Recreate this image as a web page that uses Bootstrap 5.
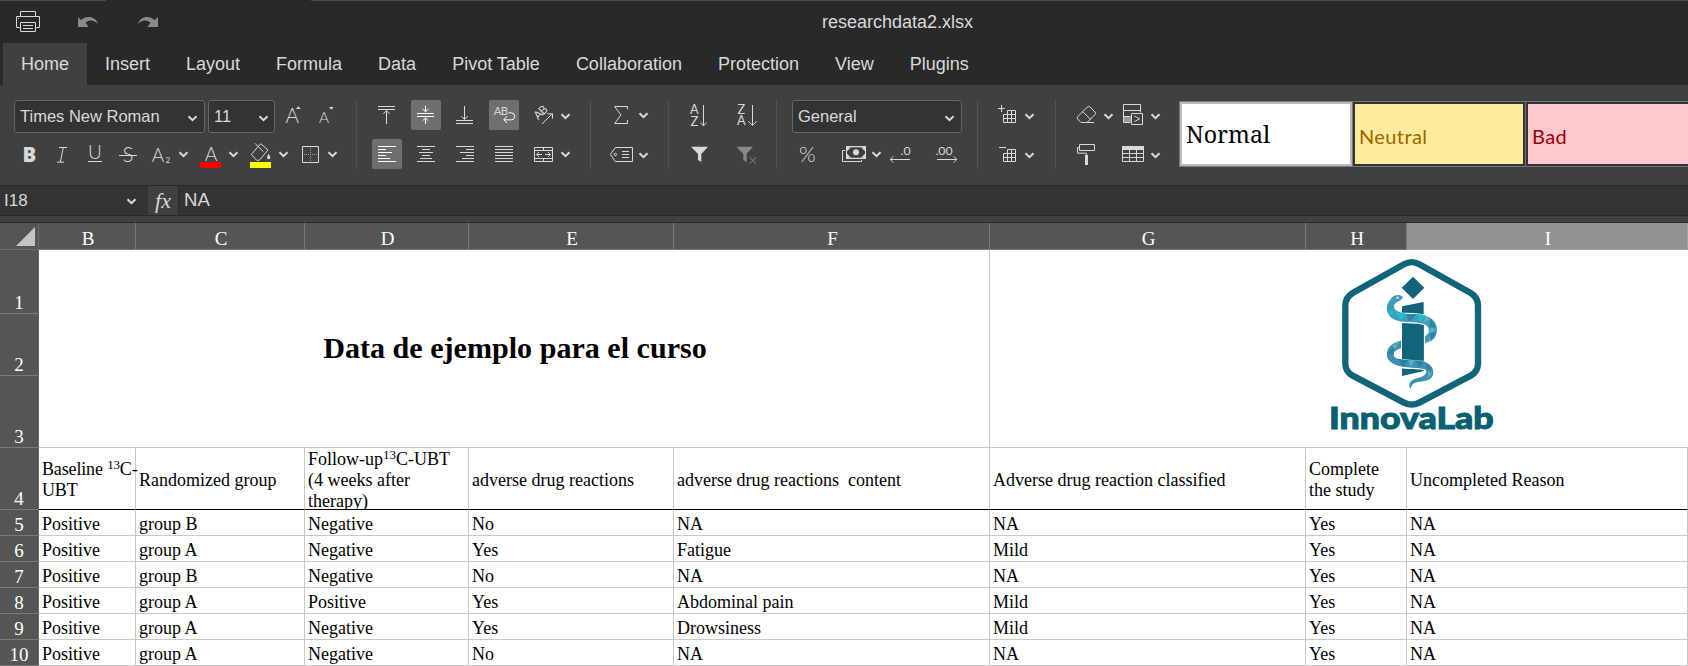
<!DOCTYPE html>
<html lang="en">
<head>
<meta charset="utf-8">
<title>researchdata2.xlsx</title>
<link href="https://cdn.jsdelivr.net/npm/bootstrap@5.3.0/dist/css/bootstrap.min.css" rel="stylesheet">
<style>
body{width:1688px;height:666px;overflow:hidden;background:#404040;color:#d9d9d9;font-family:"Liberation Sans",Arial,sans-serif;line-height:1.2}
svg{display:block;flex:none;overflow:visible}
.titlebar{height:43px;background:#292929}
.titlebar .edge{height:1px;background:#4a4a4a}
.edge-a{width:106px}.edge-b{width:1377px}
.undo{margin-left:-62px}.redo{margin-left:40px}
.doc-name{font-size:18px;margin-left:664px;padding-top:1px}
.tabs{height:42px;background:#292929;padding-left:3px}
.tabs .nav-link{color:#d9d9d9;font-size:18px;line-height:42px;padding:0 18px;border-radius:0}
.tabs .nav-link.active{background:#404040}
.ribbon{height:100px;padding-top:15px}
.tool-group{height:69px;padding-left:15px;border-right:1px solid #525252;flex:none}
.tool-row{display:flex;height:30px;align-items:flex-start}
.tool-row+.tool-row{margin-top:9px}
.g1{width:357px;padding-left:14px}.g2{width:234px}.g3{width:78px}.g4{width:108px}.g5{width:201px}.g6{width:78px;padding-left:14px}.g7{width:123px;border:0}
.gap3{gap:3px}.gap9{gap:9px}.gap18{gap:18px}.gap17{gap:17px}.gap2{gap:2px}
.tool{display:flex;width:30px;height:30px;border-radius:2px;flex:none}
.tool.on{background:#6f6f6f}
.split{display:flex;width:45px;flex:none}
.color-tool{margin-left:2px}.border-tool{margin-left:1px}
.money{margin-left:17px}.dec{margin-left:1px}.inc{margin-left:17px}
.ico{width:30px;height:30px;fill:none;stroke:#d9d9d9;stroke-width:3}
.ico text{fill:#d9d9d9;stroke:none;font-family:Lato,"Open Sans",sans-serif;font-weight:300}
.ico text.bold-b{font-family:"Open Sans",sans-serif;font-weight:800}
.ico text.reg{font-weight:400}
.ico.lit{stroke:#fff}
.ico .solid{fill:#d9d9d9;stroke:none}
.caret{width:15px;height:30px;fill:none;stroke:#d9d9d9;stroke-width:2}
.combo{height:33px;background:#333;border:1px solid #666;border-radius:3px;font-size:16.5px;padding-left:5px;flex:none}
.combo .caret{margin:2px 4px 0 0}
.w-font{width:191px}.w-size{width:67px}.w-size .caret{margin-right:3px}.w-fmt{width:170px}
.gallery{height:66px;margin-top:1px;border:1px solid #777;border-right:0;flex:none;width:509px;overflow:hidden}
.swatch{width:172px;height:64px;border:2px solid #333;box-shadow:1px 0 0 #777;margin-right:1px;flex:none;padding-left:4px}
.swatch.picked{border-color:#bbb}
.normal{background:#fff;color:#000;font:23.2px "Noto Serif","Liberation Serif",serif}
.neutral{background:#ffeb9c;color:#9c6500}
.bad{background:#ffc7ce;color:#9c0006}
.neutral,.bad{font:20px Lato,sans-serif;letter-spacing:.4px;padding-top:3px}
.formula{height:31px;background:#333;border-top:1px solid #282828;border-bottom:1px solid #282828}
.name-box{width:147px;padding:1px 0 0 4px;font-size:17px}
.fx{width:31px;background:#404040;border-right:1px solid #282828;font:italic 22px "Liberation Serif",serif;margin-left:1px}
.f-text{font-size:18.6px;padding-left:5px}
.strip{height:7px;border-bottom:1px solid #282828}
.sheet{display:grid;grid-template-columns:39px 97px 169px 164px 205px 316px 316px 101px 281px;grid-template-rows:27px 64px 62px 72px 62px repeat(6,26px);background:#fff;color:#000;font:18px/21px "Liberation Serif","Times New Roman",serif}
.sheet>div{border-right:1px solid #c8c8c8;border-bottom:1px solid #c8c8c8;display:flex;align-items:center;padding:3px 0 0 3px;white-space:pre;min-width:0;min-height:0}
.sheet>.ch,.sheet>.rh{background:#555;color:#fff;border-color:#7a7a7a;justify-content:center;padding:0;font-size:19px}
.sheet>.ch{padding:4px 0 0 2px}
.sheet>.rh{align-items:flex-end;border-right-color:#666}
.sheet>.sel{background:#929292;border-color:#a0a0a0}
.sheet>.corner{align-items:flex-end;justify-content:flex-end;border-color:#6b7340;padding:0 3px 3px 0}
.sheet>.hd{border-bottom-color:#000}
.sheet>.merge-a{grid-column:2/7;grid-row:2/5;font-size:30.1px;font-weight:700;justify-content:center;padding:0 0 0 2px}
.sheet>.merge-b{grid-column:7/10;grid-row:2/5;padding:0 0 0 310px;align-items:flex-start;border-right:0}
.sheet>.clip{overflow:hidden}
.tight{letter-spacing:-.15px}
.sup{font-size:13px;position:relative;top:-6px;line-height:1px}
</style>
</head>
<body>
<svg width="0" height="0" class="position-absolute">
  <symbol id="dn" viewBox="0 0 15 30"><path d="M3.5 13.2l4 4 4-4"/></symbol>
</svg>

<header class="titlebar">
  <div class="d-flex justify-content-between"><div class="edge edge-a"></div><div class="edge edge-b"></div></div>
  <div class="d-flex align-items-center">
    <svg width="140" height="42" viewBox="0 3 420 126" fill="none" stroke="#d9d9d9" stroke-width="3">
      <path d="M61.500 49.500V34.500H106.500V49.500M61.500 82.500H49.500V49.500H118.500V82.500H106.500M61.500 67.500H106.500V94.500H61.500zM69 76.500H99M69 85.500H99M54 55.500H57"/>
    </svg>
    <svg width="20" height="42" viewBox="234 3 60 126" class="undo" fill="#8a8a8a"><path d="M234 51L243 60C258 46 287 47 294 73C283 60 267 58 257 69L266 81H234z"/></svg>
    <svg width="20" height="42" viewBox="415 3 60 126" class="redo" fill="#8a8a8a"><path d="M475 51L465 60C450 46 421 47 415 73C425 60 442 58 452 69L443 81H475z"/></svg>
    <div class="doc-name">researchdata2.xlsx</div>
  </div>
</header>

<nav class="nav flex-nowrap tabs">
  <a class="nav-link active">Home</a><a class="nav-link">Insert</a><a class="nav-link">Layout</a><a class="nav-link">Formula</a><a class="nav-link">Data</a><a class="nav-link">Pivot Table</a><a class="nav-link">Collaboration</a><a class="nav-link">Protection</a><a class="nav-link">View</a><a class="nav-link">Plugins</a>
</nav>

<section class="ribbon d-flex">
  <div class="tool-group g1">
    <div class="tool-row gap3">
      <div class="combo w-font d-flex align-items-center justify-content-between"><span>Times New Roman</span><svg class="caret"><use href="#dn"/></svg></div>
      <div class="combo w-size d-flex align-items-center justify-content-between"><span>11</span><svg class="caret"><use href="#dn"/></svg></div>
      <div class="tool"><svg class="ico" viewBox="834 300 90 90"><text x="877" y="370" font-size="62" text-anchor="middle">A</text><path class="solid" d="M888 327L895 319L902 327z"/></svg></div>
      <div class="tool"><svg class="ico" viewBox="933 300 90 90"><text x="972" y="370" font-size="46" text-anchor="middle">A</text><path class="solid" d="M987 321L994 329L1001 321z"/></svg></div>
    </div>
    <div class="tool-row gap3">
      <div class="tool"><svg class="ico" viewBox="42 417 90 90"><text class="bold-b" x="88" y="486" font-size="61" text-anchor="middle">B</text></svg></div>
      <div class="tool"><svg class="ico" viewBox="141 417 90 90"><path d="M177 442.500H201M171 486.500H192M190 442L181 486"/></svg></div>
      <div class="tool"><svg class="ico" viewBox="240 417 90 90"><text x="285" y="478" font-size="57" text-anchor="middle">U</text><path d="M264 484.500H306"/></svg></div>
      <div class="tool"><svg class="ico" viewBox="339 417 90 90"><text x="384" y="486" font-size="62" text-anchor="middle">S</text><path d="M357 466.500H411"/></svg></div>
      <div class="split"><svg class="ico" viewBox="438 417 90 90"><text x="474" y="485" font-size="57" text-anchor="middle">A</text><text class="reg" x="504" y="489" font-size="25" text-anchor="middle">2</text></svg><svg class="caret"><use href="#dn"/></svg></div>
      <div class="split color-tool"><svg class="ico" viewBox="588 417 90 90"><text x="633" y="482" font-size="58" text-anchor="middle">A</text><path d="M600 486H663V504H600z" fill="#f00" stroke="none"/></svg><svg class="caret"><use href="#dn"/></svg></div>
      <div class="split color-tool"><svg class="ico" viewBox="738 417 90 90"><path d="M754 463L782 431L804 450L778 481H770zM765 430L790 455"/><path class="solid" d="M806 461Q816 476 806 478Q796 476 806 461z"/><path d="M750 486H813V504H750z" fill="#ff0" stroke="none"/></svg><svg class="caret"><use href="#dn"/></svg></div>
      <div class="split border-tool"><svg class="ico" viewBox="885 417 90 90"><path d="M907.500 439.500H955.500V487.500H907.500z"/><path stroke="#9a9a9a" stroke-dasharray="3 3" d="M912 463.500H954M931.500 444V486"/></svg><svg class="caret"><use href="#dn"/></svg></div>
    </div>
  </div>

  <div class="tool-group g2">
    <div class="tool-row gap9">
      <div class="tool"><svg class="ico" viewBox="96 45 90 90"><path d="M114 64.500H165M114 73.500H165M139.500 117V77M130 87L139.500 77L149 87"/></svg></div>
      <div class="tool on"><svg class="ico lit" viewBox="213 45 90 90"><path d="M231 85.500H282M231 94.500H282M256.500 62V80M248 72L256.500 80L265 72M256.500 117V99M248 107L256.500 99L265 107"/></svg></div>
      <div class="tool"><svg class="ico" viewBox="330 45 90 90"><path d="M348 106.500H399M348 115.500H399M373.500 63V103M364 94L373.500 103L383 94"/></svg></div>
      <div class="tool on"><svg class="ico lit" viewBox="447 45 90 90"><text class="reg" x="461" y="90" font-size="34" textLength="43" fill="#fff">AB</text><path d="M506 83.500H514Q524 84 524 94T514 104.500H492M501 94L491 104L501 114"/></svg></div>
      <div class="split"><svg class="ico" viewBox="564 45 90 90"><text class="reg" transform="translate(595 106) rotate(-45)" font-size="35" textLength="43">AB</text><path d="M606 117L637 86M622 86.500H637.500V101"/></svg><svg class="caret"><use href="#dn" y="1"/></svg></div>
    </div>
    <div class="tool-row gap9">
      <div class="tool on"><svg class="ico lit" viewBox="96 162 90 90"><path d="M114 184.500H168M114 193.500H138M114 202.500H156M114 211.500H138M114 220.500H150M114 229.500H168"/></svg></div>
      <div class="tool"><svg class="ico" viewBox="213 162 90 90"><path d="M231 184.500H285M246 193.500H270M237 202.500H279M246 211.500H270M240 220.500H276M231 229.500H285"/></svg></div>
      <div class="tool"><svg class="ico" viewBox="330 162 90 90"><path d="M348 184.500H402M378 193.500H402M360 202.500H402M378 211.500H402M366 220.500H402M348 229.500H402"/></svg></div>
      <div class="tool"><svg class="ico" viewBox="447 162 90 90"><path d="M465 184.500H519M465 193.500H519M465 202.500H519M465 211.500H519M465 220.500H519M465 229.500H519"/></svg></div>
      <div class="split"><svg class="ico" viewBox="564 162 90 90"><path d="M583.500 187.500H637.500V229.500H583.500zM583.500 196.500H637.500M583.500 220.500H637.500M610.500 187V196M610.500 220V229M590 208.500H606M615 208.500H631M597 201L590 208.500L597 216M624 201L631 208.500L624 216"/></svg><svg class="caret"><use href="#dn"/></svg></div>
    </div>
  </div>

  <div class="tool-group g3">
    <div class="tool-row"><div class="split"><svg class="ico" viewBox="798 45 90 90"><path d="M862.500 73V64.500H824L843 90L824 115.500H862.500V105"/></svg><svg class="caret"><use href="#dn"/></svg></div></div>
    <div class="tool-row"><div class="split"><svg class="ico" viewBox="798 162 90 90"><path d="M811 208.500L826 187.500H877.500V229.500H826zM846 199.500H867M846 208.500H867M846 217.500H867"/><circle cx="826" cy="208.500" r="3.500"/></svg><svg class="caret"><use href="#dn" y="1"/></svg></div></div>
  </div>

  <div class="tool-group g4">
    <div class="tool-row gap18">
      <div class="tool"><svg class="ico" viewBox="132 45 90 90"><text class="reg" x="163" y="88" font-size="38" text-anchor="middle">A</text><text class="reg" x="163" y="123" font-size="39" text-anchor="middle">Z</text><path d="M190.500 60V122M181 113L190.500 122L200 113"/></svg></div>
      <div class="tool"><svg class="ico" viewBox="276 45 90 90"><text class="reg" x="304" y="87" font-size="38" text-anchor="middle">Z</text><text class="reg" x="304" y="121" font-size="38" text-anchor="middle">A</text><path d="M337.500 60V121M325 109L337.500 121L350 109"/></svg></div>
    </div>
    <div class="tool-row gap18">
      <div class="tool"><svg class="ico" viewBox="132 162 90 90"><path class="solid" d="M153 185H204L184 207V231L174 225V207z"/></svg></div>
      <div class="tool"><svg class="ico" viewBox="276 162 90 90"><path d="M289 185H339L320 206V231L310 225V207z" fill="#8a8a8a" stroke="none"/><path stroke="#8a8a8a" d="M329 217L348 236M348 217L329 236"/></svg></div>
    </div>
  </div>

  <div class="tool-group g5">
    <div class="tool-row"><div class="combo w-fmt d-flex align-items-center justify-content-between"><span>General</span><svg class="caret"><use href="#dn"/></svg></div></div>
    <div class="tool-row">
      <div class="tool"><svg class="ico" viewBox="456 162 90 90"><text x="502" y="230" font-size="62" text-anchor="middle" textLength="50" lengthAdjust="spacingAndGlyphs">%</text></svg></div>
      <div class="split money"><svg class="ico" viewBox="597 162 90 90"><path class="solid" d="M618 183H678V222H618z"/><path d="M627 187H669L675 193V212L669 218H627L621 212V193z" fill="#404040" stroke="none"/><circle cx="648" cy="202" r="9" class="solid"/><path d="M633 187L621 199V187zM663 187L675 199V187zM633 218L621 206V218zM663 218L675 206V218z" class="solid"/><path d="M615 196.500H607.500V229.500H664.500V225"/></svg><svg class="caret"><use href="#dn"/></svg></div>
      <div class="tool dec"><svg class="ico" viewBox="735 162 90 90"><text class="reg" x="812" y="210" font-size="37" text-anchor="end">.0</text><path d="M810 223.500H751M760 214L751 223.500L760 233"/></svg></div>
      <div class="tool inc"><svg class="ico" viewBox="876 162 90 90"><text class="reg" x="938" y="210" font-size="37" text-anchor="end">.00</text><path d="M891 223.500H950M941 214L950 223.500L941 233"/></svg></div>
    </div>
  </div>

  <div class="tool-group g6">
    <div class="tool-row"><div class="split"><svg class="ico" viewBox="96 45 90 90"><path d="M114 70.500H134M124.500 60V81M142.500 76.500H166.500V112.500H130.500V88.500H166.500M130.500 100.500H166.500M142.500 76.500V112.500M154.500 76.500V112.500"/></svg><svg class="caret"><use href="#dn" y="1"/></svg></div></div>
    <div class="tool-row"><div class="split"><svg class="ico" viewBox="96 162 90 90"><path d="M117 187.500H138M142.500 193.500H166.500V229.500H130.500V205.500H166.500M130.500 217.500H166.500M142.500 193.500V229.500M154.500 193.500V229.500"/></svg><svg class="caret"><use href="#dn" y="1"/></svg></div></div>
  </div>

  <div class="tool-group g7">
    <div class="tool-row gap2">
      <div class="split"><svg class="ico" viewBox="333 45 90 90"><path d="M363 112.500L353 102Q350 98 354 94L382 66Q386 62 390 66L405 81Q409 85 405 89L381 112.500M368 80L393 104M363 112.500H402"/></svg><svg class="caret"><use href="#dn" y="1"/></svg></div>
      <div class="split"><svg class="ico" viewBox="474 45 90 90"><path d="M490 94H514V112H490z" fill="#999" stroke="none"/><path d="M511 112.500H490.500V58.500H541.500V82M490.500 76.500H541.500M490.500 94.500H511M514.500 85.500H547.500V118.500H514.500zM523 93L539 101.500L523 110"/></svg><svg class="caret"><use href="#dn" y="1"/></svg></div>
    </div>
    <div class="tool-row gap17">
      <div class="tool"><svg class="ico" viewBox="333 162 90 90"><path d="M358.500 178.500H403.500V196.500H358.500zM358.500 187.500H352.500V204.500H379.500V210"/><path class="solid" d="M375 210H384V240H375z"/></svg></div>
      <div class="split"><svg class="ico" viewBox="474 162 90 90"><path class="solid" d="M486 183H552V195H486z"/><path d="M487.500 192V229.500H550.500V192M487.500 205.500H550.500M487.500 217.500H550.500M508.500 192V229.500M529.500 192V229.500"/></svg><svg class="caret"><use href="#dn" y="1"/></svg></div>
    </div>
  </div>

  <div class="gallery d-flex">
    <div class="swatch picked normal d-flex align-items-center">Normal</div>
    <div class="swatch neutral d-flex align-items-center">Neutral</div>
    <div class="swatch bad d-flex align-items-center">Bad</div>
  </div>
</section>

<section class="formula d-flex">
  <div class="name-box d-flex align-items-center justify-content-between"><span>I18</span><svg class="caret me-2"><use href="#dn"/></svg></div>
  <div class="fx d-flex align-items-center justify-content-center">fx</div>
  <div class="f-text d-flex align-items-center">NA</div>
</section>
<div class="strip"></div>

<main class="sheet">
  <div class="ch corner"><svg width="19" height="19"><path d="M0 19L19 0V19z" fill="#c4c4c4"/></svg></div>
  <div class="ch">B</div><div class="ch">C</div><div class="ch">D</div><div class="ch">E</div><div class="ch">F</div><div class="ch">G</div><div class="ch">H</div><div class="ch sel">I</div>
  <div class="rh">1</div>
  <div class="merge-a">Data de ejemplo para el curso</div>
  <div class="merge-b">
    <svg width="220" height="197" viewBox="0 30 660 591">
      <path d="M312 73Q335 60 358 73L512 159Q534 172 534 197V371Q534 394 512 407L358 488Q335 500 312 488L158 407Q136 394 136 371V197Q136 172 158 159z" fill="none" stroke="#12647a" stroke-width="19"/>
      <path d="M339 110L373 143L339 177L305 143zM306 199L371 186V393L306 408z" fill="#12647a"/>
      <g fill="none" stroke="#fff">
        <path d="M275 195C262 222 285 234 317 234C362 235 402 238 400 270C399 286 390 294 377 300" stroke-width="31"/>
        <path d="M303 313C270 322 260 345 277 360C300 378 340 370 371 376C400 385 398 408 376 417" stroke-width="28"/>
      </g>
      <path d="M306 251L371 256V362L306 356z" fill="#12647a"/>
      <path d="M272 178C279 163 301 161 309 171C306 181 293 184 286 190C274 207 289 216 318 221C350 222 376 223 395 236C418 254 415 290 394 302L375 310V289C392 280 391 258 370 251C335 242 292 252 271 230C257 216 257 194 272 178z" fill="#3d9dba"/>
      <path d="M303 302V325C278 332 274 348 292 356C323 363 350 357 374 365C399 374 409 401 391 416C374 430 333 417 333 448C320 430 333 420 351 415C374 411 386 397 375 388C342 379 298 388 272 366C250 347 260 310 303 302z" fill="#3d91b0"/>
      <path d="M283 216L318 221L305 241zM350 222L376 225L360 249zM263 210L283 214L271 230z" fill="#22bbd4"/>
      <path d="M318 222L350 223L328 244zM392 236L410 262L389 262zM389 280L410 275L394 302zM262 340L280 322L282 345zM292 356L325 360L310 380zM346 361L374 366L357 382zM376 366L397 384L384 391z" fill="#2a7795" opacity=".65"/>
      <path d="M376 226L392 236L370 251zM391 262L411 270L389 280zM275 317L300 304L286 328zM325 360L345 361L332 383zM384 394L399 398L383 413z" fill="#68b4c8" opacity=".75"/>
      <circle cx="293" cy="173" r="3.500" fill="#d8f3f7"/>
      <text x="87" y="568" textLength="494" lengthAdjust="spacingAndGlyphs" font-family="Lato,sans-serif" font-weight="900" font-size="93" fill="#086072" stroke="#086072" stroke-width="3">InnovaLab</text>
    </svg>
  </div>
  <div class="rh">2</div><div class="rh">3</div>
  <div class="rh">4</div>
  <div class="hd"><span class="tight">Baseline <span class="sup">13</span>C-
UBT</span></div><div class="hd">Randomized group</div><div class="hd clip"><span>Follow-up<span class="sup">13</span>C-UBT
(4 weeks after
therapy)</span></div><div class="hd">adverse drug reactions</div><div class="hd">adverse drug reactions  content</div><div class="hd">Adverse drug reaction classified</div><div class="hd">Complete
the study</div><div class="hd">Uncompleted Reason</div>
  <div class="rh">5</div><div>Positive</div><div>group B</div><div>Negative</div><div>No</div><div>NA</div><div>NA</div><div>Yes</div><div>NA</div>
  <div class="rh">6</div><div>Positive</div><div>group A</div><div>Negative</div><div>Yes</div><div>Fatigue</div><div>Mild</div><div>Yes</div><div>NA</div>
  <div class="rh">7</div><div>Positive</div><div>group B</div><div>Negative</div><div>No</div><div>NA</div><div>NA</div><div>Yes</div><div>NA</div>
  <div class="rh">8</div><div>Positive</div><div>group A</div><div>Positive</div><div>Yes</div><div>Abdominal pain</div><div>Mild</div><div>Yes</div><div>NA</div>
  <div class="rh">9</div><div>Positive</div><div>group A</div><div>Negative</div><div>Yes</div><div>Drowsiness</div><div>Mild</div><div>Yes</div><div>NA</div>
  <div class="rh">10</div><div>Positive</div><div>group A</div><div>Negative</div><div>No</div><div>NA</div><div>NA</div><div>Yes</div><div>NA</div>
</main>
<script src="https://cdn.jsdelivr.net/npm/bootstrap@5.3.0/dist/js/bootstrap.bundle.min.js"></script>
</body>
</html>
